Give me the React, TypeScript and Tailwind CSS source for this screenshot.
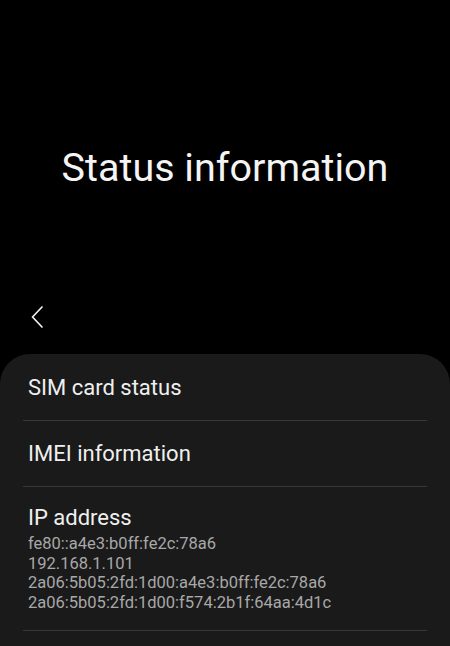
import React from 'react';

const ipLines = [
    "fe80::a4e3:b0ff:fe2c:78a6",
    "192.168.1.101",
    "2a06:5b05:2fd:1d00:a4e3:b0ff:fe2c:78a6",
    "2a06:5b05:2fd:1d00:f574:2b1f:64aa:4d1c",
];

function Divider() {
    return <div className="h-px bg-[#373737]" />;
}

export default function App() {
    return (
        <div className="w-[450px] h-[646px] overflow-hidden bg-black flex flex-col font-['Roboto',_'Liberation_Sans',_sans-serif]">
            <div className="pt-[144px] text-center text-[39.5px] leading-[48px] text-[#f4f4f4]">
                Status information
            </div>

            <div className="mt-[114px] pl-[31px] h-[22px]">
                <svg width="12" height="22" viewBox="0 0 12 22" fill="none">
                    <path d="M11 1 L1.5 11 L11 21" stroke="#f0f0f0" strokeWidth="1.7" strokeLinecap="round" strokeLinejoin="round" />
                </svg>
            </div>

            <div className="mt-[26px] flex-1 rounded-t-[30px] bg-[#1a1a1a] px-[23px]">
                <div className="pt-[20px] pb-[18px] pl-[5px] text-[22px] leading-[28px] text-[#efefef]">
                    SIM card status
                </div>
                <Divider />
                <div className="pt-[19px] pb-[18px] pl-[5px] text-[22px] leading-[28px] text-[#efefef]">
                    IMEI information
                </div>
                <Divider />
                <div className="pt-[17px] pb-[17px] pl-[5px]">
                    <div className="text-[22px] leading-[28px] text-[#efefef]">IP address</div>
                    <div className="mt-[2px] text-[16.5px] leading-[19.7px] text-[#a8a8a8]">
                        {ipLines.map((line) => (
                            <div key={line}>{line}</div>
                        ))}
                    </div>
                </div>
                <Divider />
            </div>
        </div>
    );
}
